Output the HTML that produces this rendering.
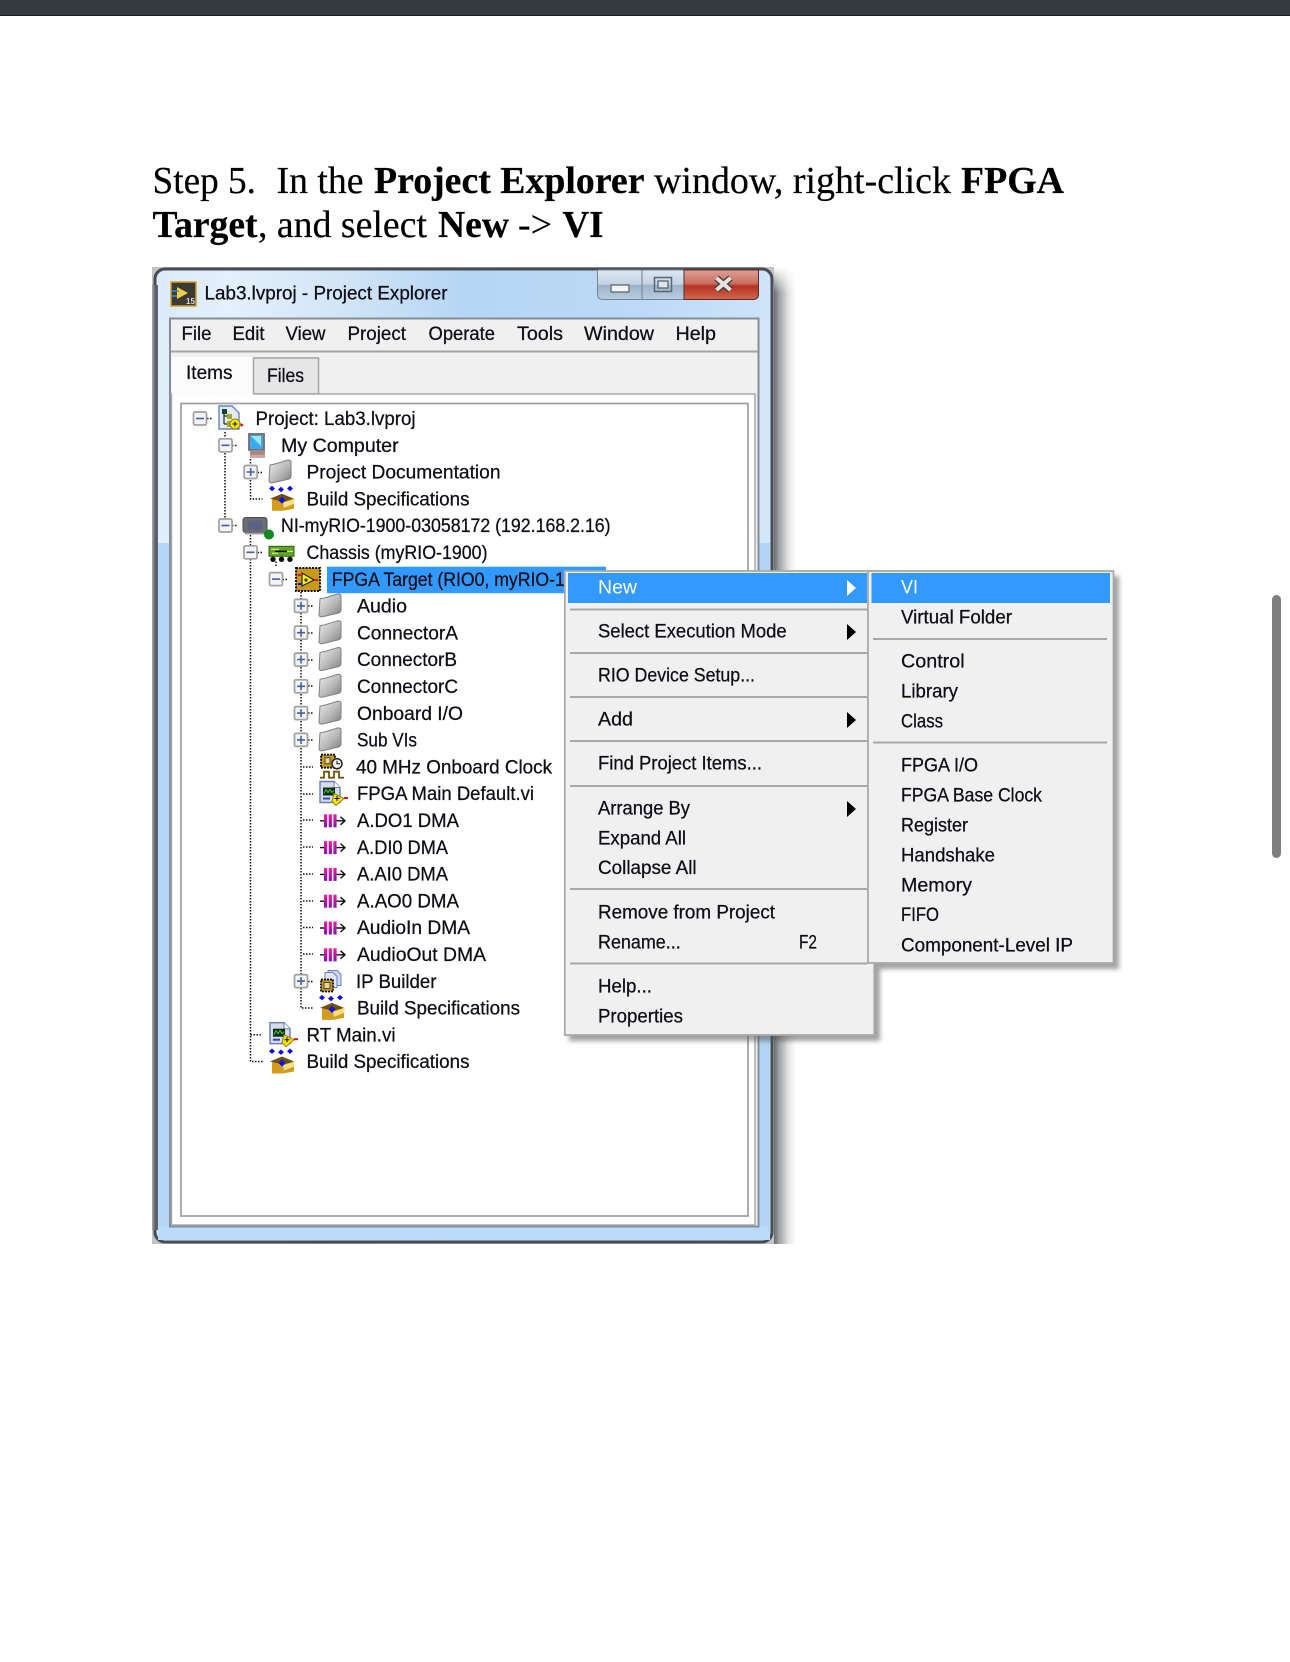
<!DOCTYPE html>
<html><head><meta charset="utf-8"><title>Step 5</title>
<style>
html,body{margin:0;padding:0;background:#fff;width:1290px;height:1662px;overflow:hidden}
svg{display:block;position:absolute;left:0;top:0}
.h{font-family:"Liberation Serif",serif;font-size:38px;fill:#000;stroke:#000;stroke-width:.2px}
.b{font-weight:bold}
.t{font-family:"Liberation Sans",sans-serif;font-size:19px;fill:#0c0c18;stroke:#0c0c18;stroke-width:.25px}
.w{fill:#fff;stroke:#fff}
</style></head><body>
<svg width="1290" height="1662" viewBox="0 0 1290 1662" xmlns="http://www.w3.org/2000/svg">
<defs>
<filter id="soft" x="0" y="0" width="1290" height="1662" filterUnits="userSpaceOnUse"><feGaussianBlur stdDeviation="0.38"/></filter>
<filter id="sh" x="-10%" y="-10%" width="120%" height="120%"><feGaussianBlur stdDeviation="2.5"/></filter>
<linearGradient id="frame" x1="0" x2="1" y1="0" y2="0">
<stop offset="0" stop-color="#dbeafa"/><stop offset=".12" stop-color="#e4f0fb"/><stop offset=".3" stop-color="#d3e5f6"/><stop offset=".5" stop-color="#b5d6f5"/><stop offset=".8" stop-color="#bcdaf7"/><stop offset="1" stop-color="#cfe4f9"/>
</linearGradient>
<linearGradient id="rs" x1="0" x2="1" y1="0" y2="0"><stop offset="0" stop-color="#54585d"/><stop offset=".3" stop-color="#a0a2a4"/><stop offset=".7" stop-color="#e6e6e6"/><stop offset="1" stop-color="#fff"/></linearGradient>
<linearGradient id="fadeT" x1="0" x2="0" y1="0" y2="1"><stop offset="0" stop-color="#fff"/><stop offset="1" stop-color="#fff" stop-opacity="0"/></linearGradient>
<linearGradient id="ls" x1="0" x2="1" y1="0" y2="0"><stop offset="0" stop-color="#a9abad"/><stop offset=".6" stop-color="#55595e"/><stop offset="1" stop-color="#666a70"/></linearGradient>
<linearGradient id="cap" x1="0" x2="0" y1="0" y2="1"><stop offset="0" stop-color="#dce7f2"/><stop offset=".48" stop-color="#c3d3e2"/><stop offset=".52" stop-color="#9fb3c8"/><stop offset="1" stop-color="#b8cde2"/></linearGradient>
<linearGradient id="red" x1="0" x2="0" y1="0" y2="1"><stop offset="0" stop-color="#dda096"/><stop offset=".45" stop-color="#c9705f"/><stop offset=".55" stop-color="#b5321f"/><stop offset="1" stop-color="#d0694f"/></linearGradient>
<linearGradient id="fold" x1="0" x2="1" y1="0" y2="1"><stop offset="0" stop-color="#efefef"/><stop offset=".55" stop-color="#b8b8b8"/><stop offset="1" stop-color="#7c7c7c"/></linearGradient>
<linearGradient id="mag" x1="0" x2="0" y1="0" y2="1"><stop offset="0" stop-color="#f81a98"/><stop offset="1" stop-color="#7c18b0"/></linearGradient>
<symbol id="fo" overflow="visible"><path d="M1 -7 L6 -8 L19 -12 Q22 -12 22 -10 L22 4 Q22 6 20 7 L3 11 Q0 11 0 9 Z" fill="url(#fold)" stroke="#808080" stroke-width="1"/></symbol>
<symbol id="bx" overflow="visible">
<path d="M3 -13l3 2.700-3 2.700-3-2.700zM12 -12l3 2.700-3 2.700-3-2.700zM21 -13l3 2.700-3 2.700-3-2.700z" fill="#0808f0"/>
<path d="M3 1 L13 -4 L25 1 V10 L14 12 H3 Z" fill="#d49c1c"/>
<path d="M1 0 L13 -5 L25 0 L14 3 Z" fill="#6e500c"/>
<path d="M14 4 L26 0 L25 5 L15 9 Z" fill="#f8e08c"/>
<path d="M13 -2l3.500 3.500-3.500 3.500-3.500-3.500z" fill="#0808f0"/>
</symbol>
<symbol id="fp" overflow="visible">
<rect x="0" y="-11" width="24" height="23" fill="#c89a1c" stroke="#111" stroke-width="2" stroke-dasharray="2 1.200"/>
<path d="M6 -6 L18 1 L6 7 Z" fill="#f8f410" stroke="#222" stroke-width="1.200"/>
<path d="M8 1h4M10 -1v4" stroke="#111"/><rect x="2" y="-5" width="4" height="2" fill="#e01818"/><rect x="2" y="4" width="4" height="2" fill="#1818d0"/><rect x="18" y="0" width="4" height="2" fill="#e01818"/>
</symbol>
<symbol id="vi" overflow="visible">
<path d="M1 -12 H15 L21 -6 V9 H1 Z" fill="#d6dcec" stroke="#6c7cb0" stroke-width="1.400"/>
<path d="M15 -12 V-6 H21" fill="#fff" stroke="#6c7cb0"/>
<rect x="4" y="-6" width="12" height="8" fill="#0c2c16"/><path d="M5 0l2-4 2 3 2-3 2 3 2-2" stroke="#40d040" fill="none"/>
<rect x="4" y="4" width="7" height="2" fill="#2c4cc0"/>
<path d="M15 0 L25 5 L17 12 L13 8 Z" fill="#f4e410" stroke="#908010" stroke-width="1"/><path d="M15.500 5h5M18 2.500v5" stroke="#111"/><rect x="25" y="3.500" width="4" height="2" fill="#e01818"/>
</symbol>
<symbol id="dm" overflow="visible">
<path d="M0 0.500h4M16.500 0.500h8" stroke="#111" stroke-width="1.400"/><path d="M20.500 -3.500l4.500 4-4.500 4" fill="none" stroke="#111" stroke-width="1.400"/>
<rect x="4" y="-6" width="3.200" height="13" fill="url(#mag)"/><rect x="8.700" y="-6" width="3.200" height="13" fill="url(#mag)"/><rect x="13.400" y="-6" width="3.200" height="13" fill="url(#mag)"/>
</symbol>
<symbol id="pl" overflow="visible"><rect x="-6.500" y="-6.500" width="13" height="13" rx="1.500" fill="#f4f4f6" stroke="#a0a0a0" stroke-width="1.700"/><path d="M-4 0h8M0 -4v8" stroke="#4060a8" stroke-width="1.600"/></symbol>
<symbol id="mi" overflow="visible"><rect x="-6.500" y="-6.500" width="13" height="13" rx="1.500" fill="#f4f4f6" stroke="#a0a0a0" stroke-width="1.700"/><path d="M-4 0h8" stroke="#4060a8" stroke-width="1.600"/></symbol>
</defs>

<rect x="0" y="0" width="1290" height="15" fill="#343a3e"/>
<rect x="0" y="15" width="1290" height="1" fill="#1c1f20"/>
<rect x="1272" y="595" width="9" height="263" rx="4.500" fill="#7f7f7f"/>

<g filter="url(#soft)">
<!-- heading -->
<text class="h" x="152.500" y="193" textLength="103.500" lengthAdjust="spacingAndGlyphs">Step 5.</text>
<text class="h" x="276.500" y="193" textLength="87" lengthAdjust="spacingAndGlyphs">In the</text>
<text class="h b" x="374" y="193" textLength="270.500" lengthAdjust="spacingAndGlyphs">Project Explorer</text>
<text class="h" x="654" y="193" textLength="297" lengthAdjust="spacingAndGlyphs">window, right-click</text>
<text class="h b" x="961" y="193" textLength="103" lengthAdjust="spacingAndGlyphs">FPGA</text>
<text class="h b" x="152.500" y="237" textLength="105" lengthAdjust="spacingAndGlyphs">Target</text>
<text class="h" x="258" y="237" textLength="169" lengthAdjust="spacingAndGlyphs">, and select</text>
<text class="h b" x="438" y="237" textLength="71" lengthAdjust="spacingAndGlyphs">New</text>
<text class="h" x="518" y="237" textLength="34" lengthAdjust="spacingAndGlyphs">-&gt;</text>
<text class="h b" x="562.500" y="237" textLength="41" lengthAdjust="spacingAndGlyphs">VI</text>

<!-- window shadow -->
<rect x="772" y="268" width="24" height="976" fill="url(#rs)"/>
<rect x="772" y="267" width="24" height="26" fill="url(#fadeT)"/>
<rect x="152" y="267" width="622" height="977" fill="#c0c2c4"/>

<!-- window frame -->
<rect x="155" y="269" width="617" height="973" rx="10" fill="url(#frame)" stroke="#484d53" stroke-width="3"/>
<rect x="152" y="285" width="6" height="945" fill="url(#ls)"/>
<rect x="158" y="320" width="11" height="223" fill="#e0eefb"/>
<rect x="158" y="543" width="11" height="688" fill="#b4d7f7"/>
<rect x="758" y="320" width="12" height="223" fill="#d4e7fa"/>
<rect x="758" y="543" width="12" height="688" fill="#b3d4f4"/>
<rect x="158" y="1226" width="612" height="14" fill="#b9daf9"/>

<!-- title -->
<rect x="171" y="282" width="25" height="24" fill="#3a3a36" stroke="#d8a020" stroke-width="1.500"/>
<path d="M177 287 L188 293 L177 299 Z" fill="#f0d040"/><path d="M171 291h8M171 296h6" stroke="#3090e0" stroke-width="1.500"/>
<text x="186" y="304" font-family="Liberation Sans,sans-serif" font-size="8" font-weight="bold" fill="#ddd">15</text>
<text class="t" x="204.500" y="299.500" textLength="243" lengthAdjust="spacingAndGlyphs">Lab3.lvproj - Project Explorer</text>

<!-- caption buttons -->
<path d="M597.500 270 V294 Q597.500 299.500 603 299.500 H684 V270 Z" fill="url(#cap)" stroke="#7a8592"/>
<path d="M642 270 V299" stroke="#6f7b88"/>
<path d="M684 270 V299.500 H753 Q758.500 299.500 758.500 294 V270 Z" fill="url(#red)" stroke="#5d2a22"/>
<rect x="611" y="285" width="18" height="7" fill="#f2f4f6" stroke="#5a6672" stroke-width="1.300"/>
<rect x="654.500" y="277.500" width="17" height="14" fill="none" stroke="#5a6672" stroke-width="1.500"/><rect x="658" y="281" width="10" height="7" fill="#dfe6ee" stroke="#5a6672" stroke-width="1.300"/>
<path d="M716.500 278 L730.500 290 M730.500 278 L716.500 290" stroke="#3c3c3c" stroke-width="6.500"/><path d="M716.500 278 L730.500 290 M730.500 278 L716.500 290" stroke="#e6e2e0" stroke-width="4"/>

<!-- menu bar -->
<rect x="170" y="318.500" width="588.500" height="908" fill="#f0f0f0" stroke="#848e98" stroke-width="2"/>
<path d="M171 351.500 H758" stroke="#a3a3a3" stroke-width="2"/>
<text class="t" x="181.500" y="340" textLength="30" lengthAdjust="spacingAndGlyphs">File</text>
<text class="t" x="232.500" y="340" textLength="32" lengthAdjust="spacingAndGlyphs">Edit</text>
<text class="t" x="285.500" y="340" textLength="40" lengthAdjust="spacingAndGlyphs">View</text>
<text class="t" x="347.500" y="340" textLength="58.500" lengthAdjust="spacingAndGlyphs">Project</text>
<text class="t" x="428.500" y="340" textLength="66.500" lengthAdjust="spacingAndGlyphs">Operate</text>
<text class="t" x="517" y="340" textLength="46" lengthAdjust="spacingAndGlyphs">Tools</text>
<text class="t" x="584" y="340" textLength="70" lengthAdjust="spacingAndGlyphs">Window</text>
<text class="t" x="675.500" y="340" textLength="40.500" lengthAdjust="spacingAndGlyphs">Help</text>

<!-- tabs -->
<rect x="172" y="357" width="81" height="38" fill="#fbfbfb"/>
<rect x="253.500" y="358" width="65" height="36" fill="#e6e6e6" stroke="#a4a4a4" stroke-width="1.500"/>
<text class="t" x="186" y="379" textLength="46.500" lengthAdjust="spacingAndGlyphs">Items</text>
<text class="t" x="267" y="382" textLength="37" lengthAdjust="spacingAndGlyphs">Files</text>

<!-- panel -->
<rect x="171.500" y="394" width="583.500" height="831" fill="#fff" stroke="#a6a8ab" stroke-width="1.500"/>
<path d="M172 394 H253" stroke="#fbfbfb" stroke-width="2"/>
<rect x="181" y="403.500" width="567" height="812.500" fill="#fff" stroke="#a0a2a6" stroke-width="1.800"/>

<!-- tree lines -->
<g stroke="#111" stroke-width="1.500" stroke-dasharray="1.500 1.500" fill="none">
<path d="M207 418.500h6M225 432v86M232 445.500h6M250.500 459v40h12M257.500 472.500h6M250.500 532v529.500h12M232 525.500h6M257.500 552.500h6M282.500 579.500h6M276 566v-6M301 592v416h12"/>
<path d="M250.500 1034.700h12M308 606h5M308 633h5M308 660h5M308 686h5M308 713h5M308 740h5M303 767h10M303 794h10M303 820h10M303 847h10M303 874h10M303 901h10M303 927.500h10M303 954h10M308 981.500h5"/>
</g>
<use href="#mi" x="200" y="418.500"/><use href="#mi" x="225.500" y="445.300"/><use href="#pl" x="250.700" y="472"/>
<use href="#mi" x="225.500" y="525.500"/><use href="#mi" x="250.500" y="552.300"/><use href="#mi" x="276" y="579.100"/>
<use href="#pl" x="301" y="605.900"/><use href="#pl" x="301" y="632.700"/><use href="#pl" x="301" y="659.500"/><use href="#pl" x="301" y="686.300"/><use href="#pl" x="301" y="713.100"/><use href="#pl" x="301" y="739.900"/><use href="#pl" x="301" y="981.100"/>

<!-- icons -->
<g transform="translate(219,418)">
<path d="M0 -12 H13 L20 -5 V11 H0 Z" fill="#e4eaf8" stroke="#6c80c0" stroke-width="1.400"/>
<path d="M5 -8v14M5 -2h8M5 6h4" stroke="#203020" stroke-width="1.200"/>
<rect x="3" y="-9" width="5" height="5" fill="#104a2a"/><rect x="8" y="-4" width="5" height="5" fill="#a8a820"/><rect x="8" y="3" width="5" height="6" fill="#a8a820"/>
<circle cx="16" cy="6" r="5" fill="#f4ec10" stroke="#908010"/><path d="M13.500 6h5M16 3.500v5" stroke="#111"/><path d="M21 5l4 2-3 2z" fill="#e01818"/>
</g>
<g transform="translate(248,445)">
<rect x="1" y="-11" width="15" height="16" fill="#38acf0" stroke="#7a6a66" stroke-width="1.800"/>
<path d="M3 -9h10v10z" fill="#a0e4ff"/>
<rect x="2" y="5" width="15" height="5" rx="1" fill="#a88880"/><rect x="2" y="10" width="15" height="3" fill="#c8a8a0"/>
</g>
<use href="#fo" x="269" y="472"/>
<use href="#bx" x="269" y="498.800"/>
<g transform="translate(243,525.500)">
<rect x="0" y="-8" width="24" height="15" rx="2.500" fill="#6a6d72" stroke="#4c4f54"/>
<rect x="5" y="-5" width="14" height="9" fill="#586284"/>
<rect x="2" y="7" width="20" height="2" fill="#a0a0a0"/>
<circle cx="26" cy="9" r="5" fill="#0c8a1c"/>
</g>
<g transform="translate(269,552.300)">
<rect x="0" y="-6" width="25" height="10" fill="#60a428" stroke="#306018"/>
<path d="M2 -3h8M12 -1h12M3 1h6" stroke="#e8f080" stroke-width="1.200"/><path d="M6 -1h12" stroke="#111" stroke-width="1.500"/>
<circle cx="4" cy="7" r="2.700" fill="#111"/><circle cx="12.500" cy="7" r="2.700" fill="#111"/><circle cx="21" cy="7" r="2.700" fill="#111"/>
</g>
<use href="#fp" x="296" y="579"/>
<use href="#fo" x="319" y="605.900"/><use href="#fo" x="319" y="632.700"/><use href="#fo" x="319" y="659.500"/><use href="#fo" x="319" y="686.300"/><use href="#fo" x="319" y="713.100"/><use href="#fo" x="319" y="739.900"/>
<g transform="translate(320,766.700)">
<rect x="1" y="-12" width="14" height="13" fill="#c89a1c" stroke="#111" stroke-width="1.800" stroke-dasharray="2 1"/><rect x="5" y="-9" width="5" height="6" fill="#e8d890" stroke="#444"/>
<circle cx="17" cy="-3" r="5" fill="#f4f4f0" stroke="#222" stroke-width="1.500"/><path d="M17 -6v3h3" stroke="#111" fill="none"/>
<path d="M0 11 H4 V5 H9 V11 H14 V5 H19 V11 H24" fill="none" stroke="#705408" stroke-width="1.800"/>
</g>
<use href="#vi" x="319" y="793.500"/>
<use href="#dm" x="320" y="820.300"/><use href="#dm" x="320" y="847.100"/><use href="#dm" x="320" y="873.900"/><use href="#dm" x="320" y="900.700"/><use href="#dm" x="320" y="927.500"/><use href="#dm" x="320" y="954.300"/>
<g transform="translate(320,981.500)">
<path d="M8 -11h9l4 4v11h-13z" fill="#d0d8f0" stroke="#6c80c0"/><path d="M5 -9h8l4 4v11h-12z" fill="#e0e6f6" stroke="#6c80c0"/>
<rect x="1" y="-2" width="12" height="12" fill="#c89a1c" stroke="#111" stroke-width="1.800" stroke-dasharray="2 1"/><rect x="4" y="1" width="6" height="6" fill="#e8d890" stroke="#444"/>
</g>
<use href="#bx" x="319" y="1007.900"/>
<use href="#vi" x="269" y="1034.700"/>
<use href="#bx" x="269" y="1061.500"/>

<!-- highlight -->
<rect x="327" y="566.700" width="279" height="26.500" fill="#3399ff"/>

<!-- tree text -->
<text class="t" x="255.500" y="425" textLength="160" lengthAdjust="spacingAndGlyphs">Project: Lab3.lvproj</text>
<text class="t" x="281" y="451.800" textLength="117.600" lengthAdjust="spacingAndGlyphs">My Computer</text>
<text class="t" x="306.500" y="478.600" textLength="194" lengthAdjust="spacingAndGlyphs">Project Documentation</text>
<text class="t" x="306.500" y="505.400" textLength="163" lengthAdjust="spacingAndGlyphs">Build Specifications</text>
<text class="t" x="281" y="532.200" textLength="329.600" lengthAdjust="spacingAndGlyphs">NI-myRIO-1900-03058172 (192.168.2.16)</text>
<text class="t" x="306.500" y="559" textLength="181" lengthAdjust="spacingAndGlyphs">Chassis (myRIO-1900)</text>
<text class="t" x="331.800" y="585.800" textLength="233" lengthAdjust="spacingAndGlyphs">FPGA Target (RIO0, myRIO-1</text>
<text class="t" x="357" y="612.600" textLength="50" lengthAdjust="spacingAndGlyphs">Audio</text>
<text class="t" x="357" y="639.400" textLength="101" lengthAdjust="spacingAndGlyphs">ConnectorA</text>
<text class="t" x="357" y="666.200" textLength="100" lengthAdjust="spacingAndGlyphs">ConnectorB</text>
<text class="t" x="357" y="693" textLength="101" lengthAdjust="spacingAndGlyphs">ConnectorC</text>
<text class="t" x="357" y="719.800" textLength="106" lengthAdjust="spacingAndGlyphs">Onboard I/O</text>
<text class="t" x="357" y="746.600" textLength="60" lengthAdjust="spacingAndGlyphs">Sub VIs</text>
<text class="t" x="356" y="773.400" textLength="196" lengthAdjust="spacingAndGlyphs">40 MHz Onboard Clock</text>
<text class="t" x="357" y="800.200" textLength="177" lengthAdjust="spacingAndGlyphs">FPGA Main Default.vi</text>
<text class="t" x="357" y="827" textLength="102" lengthAdjust="spacingAndGlyphs">A.DO1 DMA</text>
<text class="t" x="357" y="853.800" textLength="91" lengthAdjust="spacingAndGlyphs">A.DI0 DMA</text>
<text class="t" x="357" y="880.600" textLength="91" lengthAdjust="spacingAndGlyphs">A.AI0 DMA</text>
<text class="t" x="357" y="907.400" textLength="102" lengthAdjust="spacingAndGlyphs">A.AO0 DMA</text>
<text class="t" x="357" y="934.200" textLength="113" lengthAdjust="spacingAndGlyphs">AudioIn DMA</text>
<text class="t" x="357" y="961" textLength="129" lengthAdjust="spacingAndGlyphs">AudioOut DMA</text>
<text class="t" x="356" y="987.800" textLength="80.500" lengthAdjust="spacingAndGlyphs">IP Builder</text>
<text class="t" x="357" y="1014.600" textLength="163" lengthAdjust="spacingAndGlyphs">Build Specifications</text>
<text class="t" x="306.500" y="1041.400" textLength="89" lengthAdjust="spacingAndGlyphs">RT Main.vi</text>
<text class="t" x="306.500" y="1068.200" textLength="163" lengthAdjust="spacingAndGlyphs">Build Specifications</text>

<!-- context menus -->
<path d="M569 576 H1119 V969 H880 V1041 H569 Z" fill="#555" opacity=".55" filter="url(#sh)"/>
<rect x="564.800" y="571" width="309.500" height="464" fill="#f0f0f0" stroke="#a9a9a9" stroke-width="1.800"/>
<rect x="868" y="571" width="245.500" height="392" fill="#f0f0f0" stroke="#a9a9a9" stroke-width="1.800"/>
<rect x="568" y="573" width="299" height="30" fill="#3399ff"/>
<rect x="871.500" y="573" width="238.500" height="30" fill="#3399ff"/>
<g stroke="#a8a8a8" stroke-width="2">
<path d="M570 609.500H867M570 653H867M570 697H867M570 741H867M570 786H867M570 889H867M570 963.500H867"/>
<path d="M873 639H1107M873 742.500H1107"/>
</g>
<g fill="#000"><path d="M847 624 L856 632 L847 640 Z"/><path d="M847 712 L856 720 L847 728 Z"/><path d="M847 801 L856 809 L847 817 Z"/></g>
<path d="M847 580 L856 588 L847 596 Z" fill="#fff"/>
<text class="t w" x="598" y="593.500" textLength="39" lengthAdjust="spacingAndGlyphs" style="fill:#fff;stroke:#fff;stroke-width:0">New</text>
<text class="t" x="598" y="637.500" textLength="188.700" lengthAdjust="spacingAndGlyphs">Select Execution Mode</text>
<text class="t" x="598" y="681.500" textLength="157" lengthAdjust="spacingAndGlyphs">RIO Device Setup...</text>
<text class="t" x="598" y="725.500" textLength="35" lengthAdjust="spacingAndGlyphs">Add</text>
<text class="t" x="598" y="769.500" textLength="164" lengthAdjust="spacingAndGlyphs">Find Project Items...</text>
<text class="t" x="598" y="814.500" textLength="92" lengthAdjust="spacingAndGlyphs">Arrange By</text>
<text class="t" x="598" y="844.300" textLength="88" lengthAdjust="spacingAndGlyphs">Expand All</text>
<text class="t" x="598" y="874" textLength="98.600" lengthAdjust="spacingAndGlyphs">Collapse All</text>
<text class="t" x="598" y="918.300" textLength="177" lengthAdjust="spacingAndGlyphs">Remove from Project</text>
<text class="t" x="598" y="948.300" textLength="82.700" lengthAdjust="spacingAndGlyphs">Rename...</text>
<text class="t" x="799" y="948.300" textLength="18" lengthAdjust="spacingAndGlyphs">F2</text>
<text class="t" x="598" y="992.600" textLength="54" lengthAdjust="spacingAndGlyphs">Help...</text>
<text class="t" x="598" y="1022.600" textLength="85" lengthAdjust="spacingAndGlyphs">Properties</text>

<text class="t w" x="901" y="593.500" textLength="17" lengthAdjust="spacingAndGlyphs" style="fill:#fff;stroke:#fff;stroke-width:0">VI</text>
<text class="t" x="901" y="623.300" textLength="111" lengthAdjust="spacingAndGlyphs">Virtual Folder</text>
<text class="t" x="901" y="667.600" textLength="63.600" lengthAdjust="spacingAndGlyphs">Control</text>
<text class="t" x="901" y="697.600" textLength="57" lengthAdjust="spacingAndGlyphs">Library</text>
<text class="t" x="901" y="727.600" textLength="42" lengthAdjust="spacingAndGlyphs">Class</text>
<text class="t" x="901" y="771.300" textLength="77" lengthAdjust="spacingAndGlyphs">FPGA I/O</text>
<text class="t" x="901" y="801.300" textLength="141" lengthAdjust="spacingAndGlyphs">FPGA Base Clock</text>
<text class="t" x="901" y="831.600" textLength="67" lengthAdjust="spacingAndGlyphs">Register</text>
<text class="t" x="901" y="861.600" textLength="94" lengthAdjust="spacingAndGlyphs">Handshake</text>
<text class="t" x="901" y="891.600" textLength="71" lengthAdjust="spacingAndGlyphs">Memory</text>
<text class="t" x="901" y="921" textLength="38" lengthAdjust="spacingAndGlyphs">FIFO</text>
<text class="t" x="901" y="951.600" textLength="172" lengthAdjust="spacingAndGlyphs">Component-Level IP</text>
</g>
</svg>
</body></html>
